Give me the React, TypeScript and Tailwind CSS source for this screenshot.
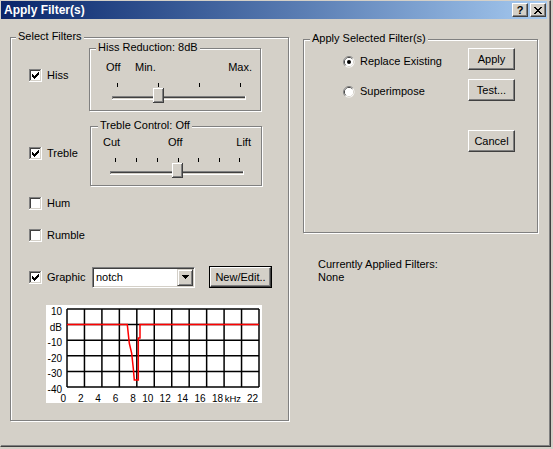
const FACE = "#d4d0c8";

const CHECK_ROWS: number[][][] = [
  [[6, 6]],
  [[5, 6]],
  [[0, 0], [4, 6]],
  [[0, 1], [3, 5]],
  [[0, 4]],
  [[1, 3]],
  [[2, 2]],
];

const CLOSE_ROWS: number[][][] = [
  [[0, 1], [6, 7]],
  [[1, 2], [5, 6]],
  [[2, 5]],
  [[3, 4]],
  [[2, 5]],
  [[1, 2], [5, 6]],
  [[0, 1], [6, 7]],
];

function Checkbox({ checked }: { checked?: boolean }) {
  return (
    <svg width="13" height="13" viewBox="0 0 13 13" shapeRendering="crispEdges" className="block shrink-0">
      <rect x="0" y="0" width="12" height="1" fill="#808080" />
      <rect x="0" y="0" width="1" height="12" fill="#808080" />
      <rect x="0" y="12" width="13" height="1" fill="#fff" />
      <rect x="12" y="0" width="1" height="13" fill="#fff" />
      <rect x="1" y="1" width="10" height="1" fill="#404040" />
      <rect x="1" y="1" width="1" height="10" fill="#404040" />
      <rect x="1" y="11" width="11" height="1" fill={FACE} />
      <rect x="11" y="1" width="1" height="11" fill={FACE} />
      <rect x="2" y="2" width="9" height="9" fill="#fff" />
      {checked &&
        CHECK_ROWS.map((segs, r) =>
          segs.map(([a, b]) => (
            <rect key={`${r}-${a}`} x={3 + a} y={3 + r} width={b - a + 1} height="1" fill="#000" />
          ))
        )}
    </svg>
  );
}

function CheckLabel({ label, checked }: { label: string; checked?: boolean }) {
  return (
    <div className="flex h-[13px] items-center gap-[5px]">
      <Checkbox checked={checked} />
      <span>{label}</span>
    </div>
  );
}

function Radio({ checked }: { checked?: boolean }) {
  const arc = (r: number) => {
    const d = r * Math.SQRT1_2;
    return `M ${6 - d} ${6 + d} A ${r} ${r} 0 0 1 ${6 + d} ${6 - d}`;
  };
  return (
    <svg width="12" height="12" viewBox="0 0 12 12" className="block shrink-0">
      <circle cx="6" cy="6" r="5.5" fill="#fff" />
      <path d={arc(5.5)} stroke="#808080" strokeWidth="1" fill="none" />
      <circle cx="6" cy="6" r="4.5" fill="none" stroke={FACE} strokeWidth="1" />
      <path d={arc(4.5)} stroke="#404040" strokeWidth="1" fill="none" />
      <circle cx="6" cy="6" r="4" fill="#fff" />
      {checked && <circle cx="6" cy="6" r="2" fill="#000" />}
    </svg>
  );
}

function RadioLabel({ label, checked }: { label: string; checked?: boolean }) {
  return (
    <div className="flex h-[13px] items-center gap-[5px]">
      <Radio checked={checked} />
      <span>{label}</span>
    </div>
  );
}

function Button({ children, def, className }: { children: React.ReactNode; def?: boolean; className: string }) {
  const face = (
    <div className="flex h-full w-full items-center justify-center border border-t-white border-l-white border-r-[#404040] border-b-[#404040] bg-[#d4d0c8] shadow-[inset_-1px_-1px_0_#808080]">
      {children}
    </div>
  );
  if (def) return <div className={`border border-black ${className}`}>{face}</div>;
  return <div className={className}>{face}</div>;
}

function Group({
  label,
  labelPos,
  className,
  children,
}: {
  label: string;
  labelPos: string;
  className: string;
  children?: React.ReactNode;
}) {
  return (
    <div className={`relative border border-[#808080] shadow-[inset_1px_1px_0_#fff,1px_1px_0_#fff] ${className}`}>
      <span className={`absolute -top-[8px] bg-[#d4d0c8] px-[2px] leading-[13px] ${labelPos}`}>{label}</span>
      {children}
    </div>
  );
}

function Trackbar({ ticks, x1, x2, thumb }: { ticks: number[]; x1: number; x2: number; thumb: number }) {
  const w = 11;
  const h = 15;
  const y = 14;
  return (
    <svg width="170" height="30" shapeRendering="crispEdges" className="block">
      {ticks.map((t) => (
        <rect key={t} x={t} y={9} width={1} height={4} fill="#000" />
      ))}
      <rect x={x1} y={22} width={x2 - x1} height={1} fill="#808080" />
      <rect x={x1} y={23} width={x2 - x1} height={1} fill="#404040" />
      <rect x={x1} y={24} width={x2 - x1} height={1} fill={FACE} />
      <rect x={x1} y={25} width={x2 - x1 + 1} height={1} fill="#fff" />
      <rect x={x1} y={22} width={1} height={3} fill="#808080" />
      <rect x={x2} y={22} width={1} height={4} fill="#fff" />
      <rect x={thumb} y={y} width={w} height={h} fill="#404040" />
      <rect x={thumb} y={y} width={w - 1} height={h - 1} fill="#fff" />
      <rect x={thumb + 1} y={y + 1} width={w - 2} height={h - 2} fill="#808080" />
      <rect x={thumb + 1} y={y + 1} width={w - 3} height={h - 3} fill={FACE} />
    </svg>
  );
}

function Combo() {
  return (
    <div className="flex h-[21px] w-[103px] items-center justify-between border border-t-[#808080] border-l-[#808080] border-r-white border-b-white bg-white p-[1px] shadow-[inset_1px_1px_0_#404040,inset_-1px_-1px_0_#d4d0c8]">
      <span className="pl-[2px]">notch</span>
      <div className="flex h-[17px] w-[16px] items-center justify-center border border-t-[#d4d0c8] border-l-[#d4d0c8] border-r-[#404040] border-b-[#404040] bg-[#d4d0c8] shadow-[inset_1px_1px_0_#fff,inset_-1px_-1px_0_#808080]">
        <svg width="7" height="4" viewBox="0 0 7 4" shapeRendering="crispEdges" className="block">
          <rect x="0" y="0" width="7" height="1" fill="#000" />
          <rect x="1" y="1" width="5" height="1" fill="#000" />
          <rect x="2" y="2" width="3" height="1" fill="#000" />
          <rect x="3" y="3" width="1" height="1" fill="#000" />
        </svg>
      </div>
    </div>
  );
}

function Chart() {
  const gx = (i: number) => 21 + (i * 192) / 11;
  const gy = (j: number) => 4 + j * 15.6;
  const yLabels = ["10", "dB", "-10", "-20", "-30", "-40"];
  const xLabels = ["0", "2", "4", "6", "8", "10", "12", "14", "16", "18", "kHz", "22"];
  const curve = [
    [21, 19.6],
    [81.3, 19.6],
    [83.3, 38.3],
    [85.7, 48.3],
    [87.3, 63.3],
    [88.3, 75],
    [92.3, 75],
    [92.3, 33],
    [94, 33],
    [94, 19.6],
    [213, 19.6],
  ];
  return (
    <svg width="216" height="98" className="block bg-white" fontFamily="'Liberation Sans', Arial, sans-serif" fontSize="10">
      {xLabels.map((_, i) => (
        <line key={`v${i}`} x1={gx(i)} y1={gy(0)} x2={gx(i)} y2={gy(5)} stroke="#000" strokeWidth="1.5" />
      ))}
      {yLabels.map((_, j) => (
        <line key={`h${j}`} x1={gx(0)} y1={gy(j)} x2={gx(11)} y2={gy(j)} stroke="#000" strokeWidth="1.5" />
      ))}
      <polyline points={curve.map((p) => p.join(",")).join(" ")} fill="none" stroke="#ff0000" strokeWidth="1.5" />
      {yLabels.map((t, j) => (
        <text key={`yl${j}`} x="16" y={gy(j) + 6} textAnchor="end" fill="#000">
          {t}
        </text>
      ))}
      {xLabels.map((t, i) => (
        <text
          key={`xl${i}`}
          x={t === "kHz" ? gx(i) - 0.5 : gx(i) - 1}
          y="96.5"
          textAnchor="end"
          fill="#000"
          fontSize={t === "kHz" ? 9.5 : 10}
        >
          {t}
        </text>
      ))}
    </svg>
  );
}

function TitleBar() {
  return (
    <div className="mr-[3px] flex h-[18px] items-center bg-linear-to-r from-[#0a246a] to-[#a6caf0] pl-[3px] pr-[1px]">
      <span className="flex-1 text-[12px] font-bold text-white">Apply Filter(s)</span>
      <div className="flex h-[14px] w-[16px] items-center justify-center border border-t-white border-l-white border-r-[#404040] border-b-[#404040] bg-[#d4d0c8] shadow-[inset_-1px_-1px_0_#808080] text-[11px] font-bold leading-[11px]">
        ?
      </div>
      <div className="ml-[2px] flex h-[14px] w-[16px] items-center justify-center border border-t-white border-l-white border-r-[#404040] border-b-[#404040] bg-[#d4d0c8] shadow-[inset_-1px_-1px_0_#808080]">
        <svg width="8" height="7" viewBox="0 0 8 7" shapeRendering="crispEdges" className="block">
          {CLOSE_ROWS.map((segs, r) =>
            segs.map(([a, b]) => <rect key={`${r}-${a}`} x={a} y={r} width={b - a + 1} height="1" fill="#000" />)
          )}
        </svg>
      </div>
    </div>
  );
}

export default function App() {
  return (
    <div className="h-[449px] w-[553px] bg-[#d4d0c8] font-['Liberation_Sans',Arial,sans-serif] text-[11px] leading-[13px] text-black">
      <div className="flex h-[447px] w-[551px] flex-col border border-t-[#d4d0c8] border-l-[#d4d0c8] border-r-[#404040] border-b-[#404040] shadow-[inset_-1px_-1px_0_#808080]">
        <TitleBar />

        <div className="flex pl-[9px] pt-[18px]">
          {/* Select Filters */}
          <Group label="Select Filters" labelPos="left-[5px]" className="h-[384px] w-[279px]">
            <div className="flex flex-col pl-[18px] pt-[10px]">
              <div className="flex">
                <div className="w-[60px] pt-[21px]">
                  <CheckLabel label="Hiss" checked />
                </div>
                <Group label="Hiss Reduction: 8dB" labelPos="left-[6px]" className="h-[63px] w-[172px]">
                  <div className="mt-[12px] flex pl-[16px] pr-[8px]">
                    <span className="w-[29px]">Off</span>
                    <span>Min.</span>
                    <span className="flex-1 text-right">Max.</span>
                  </div>
                  <Trackbar ticks={[27, 68, 109, 150]} x1={22} x2={155} thumb={63} />
                </Group>
              </div>

              <div className="mt-[15px] flex">
                <div className="w-[61px] pt-[21px]">
                  <CheckLabel label="Treble" checked />
                </div>
                <Group label="Treble Control: Off" labelPos="left-[7px]" className="h-[60px] w-[172px]">
                  <div className="mt-[9px] flex pl-[12px] pr-[10px]">
                    <span className="w-[65px]">Cut</span>
                    <span>Off</span>
                    <span className="flex-1 text-right">Lift</span>
                  </div>
                  <Trackbar ticks={[24, 45, 66, 87, 107, 128, 148]} x1={19} x2={152} thumb={81} />
                </Group>
              </div>

              <div className="mt-[11px]">
                <CheckLabel label="Hum" />
              </div>
              <div className="mt-[19px]">
                <CheckLabel label="Rumble" />
              </div>

              <div className="mt-[24px] flex h-[22px] items-center">
                <div className="w-[63px]">
                  <CheckLabel label="Graphic" checked />
                </div>
                <Combo />
                <Button def className="ml-[14px] h-[22px] w-[63px]">
                  New/Edit..
                </Button>
              </div>

              <div className="ml-[17px] mt-[17px]">
                <Chart />
              </div>
            </div>
          </Group>

          {/* Apply Selected Filter(s) */}
          <div className="ml-[14px] flex flex-col pt-[2px]">
            <Group label="Apply Selected Filter(s)" labelPos="left-[6px]" className="h-[194px] w-[235px]">
              <div className="flex">
                <div className="flex w-[164px] flex-col pl-[39px] pt-[15px]">
                  <RadioLabel label="Replace Existing" checked />
                  <div className="mt-[17px]">
                    <RadioLabel label="Superimpose" />
                  </div>
                </div>
                <div className="flex flex-col pt-[8px]">
                  <Button className="h-[22px] w-[47px]">Apply</Button>
                  <Button className="mt-[9px] h-[22px] w-[47px]">Test...</Button>
                  <Button className="mt-[29px] h-[22px] w-[47px]">Cancel</Button>
                </div>
              </div>
            </Group>
            <div className="ml-[15px] mt-[25px]">
              <div>Currently Applied Filters:</div>
              <div>None</div>
            </div>
          </div>
        </div>
      </div>
    </div>
  );
}
